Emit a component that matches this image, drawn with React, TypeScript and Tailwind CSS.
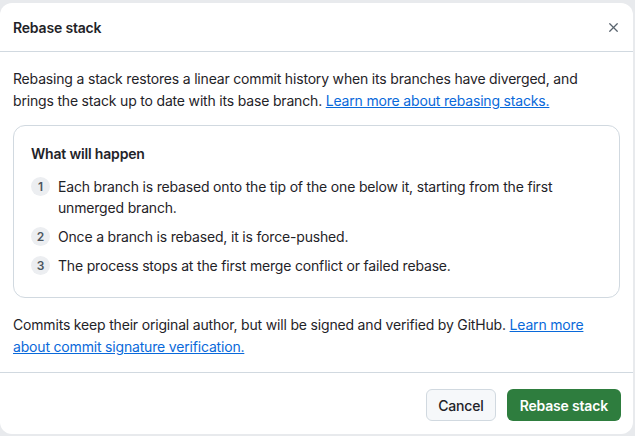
import { X } from "lucide-react";

const steps = [
  "Each branch is rebased onto the tip of the one below it, starting from the first unmerged branch.",
  "Once a branch is rebased, it is force-pushed.",
  "The process stops at the first merge conflict or failed rebase.",
];

export default function App() {
  return (
    <div className="h-[436px] w-[635px] overflow-hidden bg-[#e8eaed] pt-[3px] font-['Inter',sans-serif] text-[14px] tracking-[-0.18px] text-[#1f2328]">
      <div className="flex h-[431px] w-[633px] flex-col rounded-xl bg-white">
        <div className="flex h-[49px] items-center justify-between border-b border-[#d1d9e0] pl-[13px] pr-[8px]">
          <h1 className="text-[14px] font-semibold">Rebase stack</h1>
          <button className="flex h-6 w-6 items-center justify-center text-[#59636e]">
            <X size={15} strokeWidth={2} />
          </button>
        </div>

        <div className="flex flex-col px-[13px] pt-[16px]">
          <p className="leading-[22px]">
            Rebasing a stack restores a linear commit history when its branches have diverged, and brings the stack up
            to date with its base branch.{" "}
            <a href="#" className="text-[#0969da] underline">
              Learn more about rebasing stacks.
            </a>
          </p>

          <div className="mt-[13px] rounded-xl border border-[#d1d9e0] px-[17px] pt-[18px] pb-[21px]">
            <h2 className="font-semibold leading-5">What will happen</h2>
            <ol className="mt-[12px] flex flex-col gap-2">
              {steps.map((s, i) => (
                <li key={i} className="flex gap-[8px]">
                  <span className="mt-[1px] flex h-[19px] w-[19px] shrink-0 items-center justify-center rounded-full bg-[#eceef1] text-[12px] font-semibold tracking-normal text-[#4d5660]">
                    {i + 1}
                  </span>
                  <span className="leading-[21px]">{s}</span>
                </li>
              ))}
            </ol>
          </div>

          <p className="mt-[16px] leading-[22px]">
            Commits keep their original author, but will be signed and verified by GitHub.{" "}
            <a href="#" className="text-[#0969da] underline">
              Learn more about commit signature verification.
            </a>
          </p>
        </div>

        <div className="mt-auto flex justify-end gap-[11px] border-t border-[#d1d9e0] px-[12px] pt-4 pb-[13px]">
          <button className="h-8 rounded-md border border-[#d1d9e0] bg-[#f6f8fa] px-[11px] font-medium">Cancel</button>
          <button className="h-8 rounded-md bg-[#2e7d3e] px-[13px] font-semibold text-white">Rebase stack</button>
        </div>
      </div>
    </div>
  );
}
